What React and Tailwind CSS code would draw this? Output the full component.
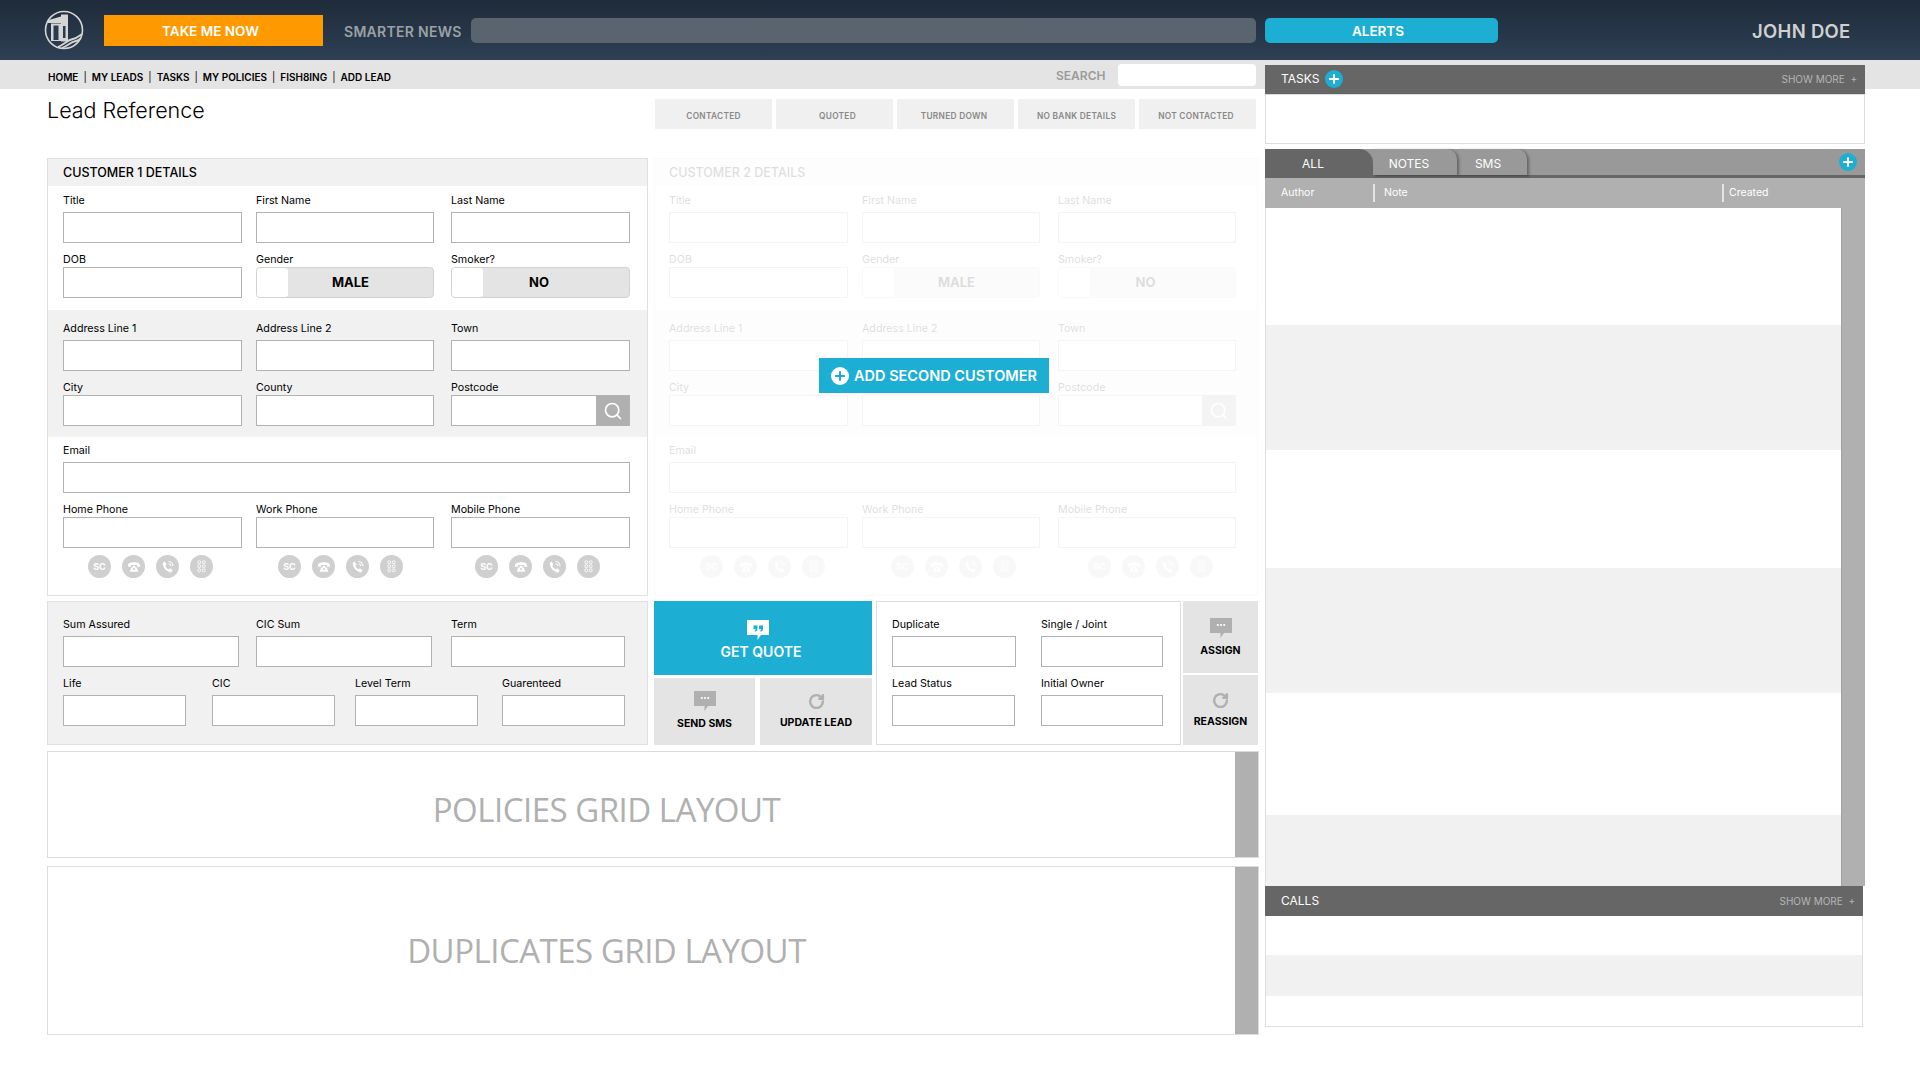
import { Search, RotateCw, Plus } from 'lucide-react'

const Input = ({ className = '' }) => (
  <div className={`h-[31px] border border-[#b2b2b2] bg-white ${className}`} />
)

function Field({ label, className = 'w-full', tall, children }) {
  return (
    <div className={className}>
      <div className={`${tall ? 'h-[20px]' : 'h-[16px]'} text-[10.700px] leading-[18px] text-black`}>{label}</div>
      {children || <Input />}
    </div>
  )
}

function Toggle({ label, textClass }) {
  return (
    <div className="relative h-[31px] rounded-[4px] border border-[#d2d2d2] bg-[#e4e4e4]">
      <div className="absolute left-0 top-0 h-full w-[31px] rounded-[3px] bg-white" />
      <div className={`flex h-full items-center justify-center text-[13px] font-bold text-black ${textClass}`}>{label}</div>
    </div>
  )
}

function RoundIcon({ children }) {
  return (
    <div className="flex h-[23px] w-[23px] items-center justify-center rounded-full bg-[#cfcfcf] text-[9px] font-bold text-white">
      {children}
    </div>
  )
}

const DeskPhone = () => (
  <svg viewBox="0 0 16 16" className="h-[14px] w-[14px]" fill="#fff">
    <path d="M1 6.500C1 3.500 4 2.500 8 2.500s7 1 7 4v1.200h-3.600V5.600H4.600v2.100H1z" />
    <path d="M4.800 8.500 3 13.500h10l-1.800-5H9.500V6.600h-3v1.900z" />
    <circle cx="8" cy="10.400" r="1.200" fill="#cfcfcf" />
  </svg>
)

const TalkPhone = () => (
  <svg viewBox="0 0 16 16" className="h-[14px] w-[14px]" fill="none">
    <path d="M4.200 1.800 6.300 5 5 6.500c.6 1.800 2 3.300 3.800 4.200l1.500-1.300 3 2.300-1.600 2.600C6.800 14 2 9 2 3.500z" fill="#fff" />
    <path d="M8.500 1.800c2.800.2 5 2.300 5.400 5.200M8.500 4.200c1.500.1 2.700 1.300 3 2.900" stroke="#fff" strokeWidth="1.200" />
  </svg>
)

const KeyGrid = () => (
  <svg viewBox="0 0 12 16" className="h-[13px] w-[11px]" fill="none" stroke="#fff" strokeWidth="1.100">
    <rect x="1.500" y="1" width="3.500" height="3.500" rx="1.500" />
    <rect x="7" y="1" width="3.500" height="3.500" rx="1.500" />
    <rect x="1.500" y="6" width="3.500" height="3.500" rx="1.500" />
    <rect x="7" y="6" width="3.500" height="3.500" rx="1.500" />
    <rect x="1.500" y="11" width="3.500" height="3.500" rx="1.500" />
    <rect x="7" y="11" width="3.500" height="3.500" rx="1.500" />
  </svg>
)

function PhoneIcons({ className }) {
  return (
    <div className={`mt-[7px] flex gap-[11px] ${className}`}>
      <RoundIcon>SC</RoundIcon>
      <RoundIcon><DeskPhone /></RoundIcon>
      <RoundIcon><TalkPhone /></RoundIcon>
      <RoundIcon><KeyGrid /></RoundIcon>
    </div>
  )
}

function CustomerCard({ title, cols, widths, inset, icons, className }) {
  const [w1, w2, w3] = widths
  return (
    <div className={`h-[438px] border border-[#e0e0e0] bg-white ${className}`}>
      <div className={`flex h-[27px] items-center bg-[#f1f1f1] pt-[1px] text-[12.500px] font-medium text-black ${inset}`}>{title}</div>
      <div className={`h-[124px] pt-[6px] ${inset}`}>
        <div className={`grid ${cols}`}>
          <Field label="Title" className={w1} tall />
          <Field label="First Name" className={w2} tall />
          <Field label="Last Name" className={w3} tall />
        </div>
        <div className={`mt-[8px] grid ${cols}`}>
          <Field label="DOB" className={w1} />
          <Field label="Gender" className={w2}><Toggle label="MALE" textClass="pl-[11px]" /></Field>
          <Field label="Smoker?" className={w3}><Toggle label="NO" textClass="pr-[3px]" /></Field>
        </div>
      </div>
      <div className={`h-[127px] bg-[#f1f1f1] pt-[10px] ${inset}`}>
        <div className={`grid ${cols}`}>
          <Field label="Address Line 1" className={w1} tall />
          <Field label="Address Line 2" className={w2} tall />
          <Field label="Town" className={w3} tall />
        </div>
        <div className={`mt-[8px] grid ${cols}`}>
          <Field label="City" className={w1} />
          <Field label="County" className={w2} />
          <Field label="Postcode" className={w3}>
            <div className="flex h-[31px] border border-[#b2b2b2] bg-white">
              <div className="flex-1" />
              <div className="flex w-[33px] items-center justify-center bg-[#b0b0b0]">
                <Search className="h-[20px] w-[20px] text-white" strokeWidth={2} />
              </div>
            </div>
          </Field>
        </div>
      </div>
      <div className={`pt-[5px] ${inset}`}>
        <Field label="Email" className="w-[567px]" tall />
        <div className={`mt-[8px] grid ${cols}`}>
          <div className={w1}>
            <Field label="Home Phone" />
            <PhoneIcons className={icons[0]} />
          </div>
          <div className={w2}>
            <Field label="Work Phone" />
            <PhoneIcons className={icons[1]} />
          </div>
          <div className={w3}>
            <Field label="Mobile Phone" />
            <PhoneIcons className={icons[2]} />
          </div>
        </div>
      </div>
    </div>
  )
}

const Bubble = ({ className, fill = '#b0b0b0', quote }) => (
  <svg viewBox="0 0 22 20" className={className}>
    <path d="M0 0h22v15h-8l-3.500 5v-5H0z" fill={fill} />
    {quote ? (
      <g fill="#1cafd3">
        <path d="M6.500 5.500h4v3.300c0 1.600-1 2.700-2.700 2.900v-1.200c.7-.2 1-.6 1-1.200H6.500z" />
        <path d="M12 5.500h4v3.300c0 1.600-1 2.700-2.700 2.900v-1.200c.7-.2 1-.6 1-1.200H12z" />
      </g>
    ) : (
      <g fill="#fff">
        <circle cx="7.800" cy="7" r="1.100" />
        <circle cx="11" cy="7" r="1.100" />
        <circle cx="14.200" cy="7" r="1.100" />
      </g>
    )}
  </svg>
)

function ActionTile({ icon, label, className, labelClass = '' }) {
  return (
    <div className={`flex flex-col items-center justify-center bg-[#e4e4e4] ${className}`}>
      {icon}
      <div className={`text-[10.500px] font-bold text-black ${labelClass}`}>{label}</div>
    </div>
  )
}

const Refresh = () => <RotateCw className="h-[17px] w-[17px] text-[#b0b0b0]" strokeWidth={3.500} />

const PlusDot = ({ className = '' }) => (
  <div className={`flex h-[18px] w-[18px] items-center justify-center rounded-full bg-[#1cafd3] ${className}`}>
    <Plus className="h-[14px] w-[14px] text-white" strokeWidth={3.500} />
  </div>
)

function GridBox({ title, className, textClass = '' }) {
  return (
    <div className={`flex border border-[#dcdcdc] bg-white ${className}`}>
      <div className={`flex flex-1 items-center justify-center pr-[70px] font-['Open_Sans',sans-serif] text-[33px] tracking-[-0.5px] text-[#b0b0b0] ${textClass}`}>
        {title}
      </div>
      <div className="w-[23px] bg-[#b0b0b0]" />
    </div>
  )
}

function PanelHeader({ title, plus, className = '' }) {
  return (
    <div className={`flex h-[29px] items-center justify-between bg-[#666666] pl-[16px] pr-[8px] ${className}`}>
      <div className={`flex items-center gap-[6px] text-[12px] text-white ${plus ? 'pb-[2px]' : ''}`}>
        {title}
        {plus ? <PlusDot /> : null}
      </div>
      <div className="text-[10px] text-[#b5b5b5]">SHOW MORE&nbsp; +</div>
    </div>
  )
}

const Logo = () => (
  <svg viewBox="0 0 40 40" className="h-[40px] w-[40px]" fill="none">
    <circle cx="20" cy="20" r="18.500" stroke="#d5d5d5" strokeWidth="1.600" />
    <path d="M3 10.500 17 6.500V13H4z" fill="#d5d5d5" />
    <path d="M7 13.500h16.500V31H7z" fill="#d5d5d5" />
    <path d="M17 4.500h7v27h-7z" fill="#d5d5d5" />
    <path d="M9.500 15.500h5V30h-5z" fill="#2a3b4d" />
    <path d="M19 16h2.500v12H19z" fill="#2a3b4d" />
    <path d="M14 37c6-2 9-7 15-8 4-.7 6-3 9-5M18 38c6-2 8-6 14-7 3-.5 4-2 5-3" stroke="#d5d5d5" strokeWidth="1.800" />
  </svg>
)

const navItems = ['HOME', 'MY LEADS', 'TASKS', 'MY POLICIES', 'FISH8ING', 'ADD LEAD']
const statuses = [
  { label: 'CONTACTED', nudge: '' },
  { label: 'QUOTED', nudge: 'pl-[6px]' },
  { label: 'TURNED DOWN', nudge: 'pr-[3px]' },
  { label: 'NO BANK DETAILS', nudge: '' },
  { label: 'NOT CONTACTED', nudge: 'pr-[3px]' },
]

export default function App() {
  return (
    <div className="min-h-screen overflow-hidden bg-white font-['Inter',sans-serif]">
      <header className="flex h-[60px] items-center bg-gradient-to-b from-[#1f2b3a] to-[#2d4054]">
        <div className="ml-[44px]"><Logo /></div>
        <div className="ml-[20px] flex h-[31px] w-[219px] items-center justify-center bg-[#ff9900] pr-[6px] pt-[2px] text-[13.500px] font-semibold text-white">
          TAKE ME NOW
        </div>
        <div className="ml-[21px] w-[127px] pt-[2px] text-[14px] font-semibold tracking-[0.3px] text-[#9ba1a6]">SMARTER NEWS</div>
        <div className="h-[25px] w-[785px] rounded-[5px] bg-[#59646e]" />
        <div className="ml-[9px] flex h-[25px] w-[233px] items-center justify-center rounded-[5px] bg-[#1cafd3] pr-[7px] pt-[3px] text-[13.500px] font-semibold text-white">
          ALERTS
        </div>
        <div className="ml-[254px] pt-[4px] text-[18.500px] font-semibold tracking-[0.3px] text-[#d0d0d0]">JOHN DOE</div>
      </header>

      <div className="flex h-[29px] items-center bg-[#e4e4e4] pl-[48px]">
        <nav className="flex w-[1008px] items-center pt-[5px] text-[10px] font-semibold text-black">
          {navItems.map((item, i) => (
            <span key={item} className="flex items-center">
              {i > 0 ? <span className="mx-[5px] font-normal">|</span> : null}
              {item}
            </span>
          ))}
        </nav>
        <div className="w-[62px] pt-[2px] text-[12px] font-semibold text-[#9a9a9a]">SEARCH</div>
        <div className="h-[22px] w-[138px] rounded-[4px] bg-white" />
      </div>

      <main className="flex">
        <div className="ml-[47px] w-[1212px]">
          <div className="flex h-[69px]">
            <h1 className="mt-[8px] h-[26px] w-[608px] text-[21.500px] leading-[26px] font-light text-black">Lead Reference</h1>
            <div className="mt-[10px] flex gap-[4px]">
              {statuses.map((status) => (
                <div key={status.label} className={`flex h-[30px] w-[117px] items-center justify-center bg-[#f0f0f0] pt-[4px] text-[8.300px] font-semibold tracking-[0.3px] text-[#888888] ${status.nudge}`}>
                  {status.label}
                </div>
              ))}
            </div>
          </div>

          <div className="flex">
            <CustomerCard
              title="CUSTOMER 1 DETAILS"
              className="w-[601px]"
              inset="px-[15px]"
              cols="grid-cols-[193px_195px_179px]"
              widths={['w-[179px]', 'w-[178px]', 'w-[179px]']}
              icons={['ml-[25px]', 'ml-[22px]', 'ml-[24px]']}
            />
            <div className="relative ml-[6px] w-[604px]">
              <div className="opacity-[0.13]">
                <CustomerCard
                  title="CUSTOMER 2 DETAILS"
                  className="w-[604px]"
                  inset="px-[14px]"
                  cols="grid-cols-[193px_196px_178px]"
                  widths={['w-[179px]', 'w-[178px]', 'w-[178px]']}
                  icons={['ml-[31px]', 'ml-[29px]', 'ml-[30px]']}
                />
              </div>
              <div className="absolute left-[165px] top-[200px] flex h-[35px] w-[230px] items-center justify-center gap-[5px] bg-[#1cafd3] text-[14.500px] font-semibold text-white">
                <div className="flex h-[18px] w-[18px] items-center justify-center rounded-full bg-white">
                  <Plus className="h-[14px] w-[14px] text-[#1cafd3]" strokeWidth={3.500} />
                </div>
                ADD SECOND CUSTOMER
              </div>
            </div>
          </div>

          <div className="mt-[5px] flex h-[144px]">
            <div className="w-[601px] border border-[#e0e0e0] bg-[#f1f1f1] px-[15px] pt-[14px]">
              <div className="grid grid-cols-[193px_195px_174px]">
                <Field label="Sum Assured" className="w-[176px]" tall />
                <Field label="CIC Sum" className="w-[176px]" tall />
                <Field label="Term" tall />
              </div>
              <div className="mt-[8px] grid grid-cols-[149px_143px_147px_123px]">
                <Field label="Life" className="w-[123px]" tall />
                <Field label="CIC" className="w-[123px]" tall />
                <Field label="Level Term" className="w-[123px]" tall />
                <Field label="Guarenteed" tall />
              </div>
            </div>

            <div className="ml-[6px] flex w-[218px] flex-col">
              <div className="flex h-[74px] flex-col items-center justify-center bg-[#1cafd3] pr-[4px] pt-[4px] text-[14px] leading-[17px] font-semibold text-white">
                <Bubble className="mb-[3px] mr-[7px] h-[20px] w-[22px]" fill="#fff" quote />
                GET QUOTE
              </div>
              <div className="mt-[3px] flex flex-1 gap-[5px]">
                <ActionTile
                  className="w-[101px]"
                  labelClass="mt-[5px]"
                  label="SEND SMS"
                  icon={<Bubble className="h-[20px] w-[22px]" />}
                />
                <ActionTile className="flex-1" labelClass="mt-[5px]" label="UPDATE LEAD" icon={<Refresh />} />
              </div>
            </div>

            <div className="ml-[4px] w-[305px] border border-[#dddddd] bg-white pl-[15px] pt-[14px]">
              <div className="grid grid-cols-[149px_122px]">
                <Field label="Duplicate" className="w-[124px]" tall />
                <Field label="Single / Joint" tall />
              </div>
              <div className="mt-[8px] grid grid-cols-[149px_122px]">
                <Field label="Lead Status" className="w-[123px]" tall />
                <Field label="Initial Owner" tall />
              </div>
            </div>

            <div className="ml-[2px] flex w-[75px] flex-col gap-[2px]">
              <ActionTile className="h-[72px] pt-[2px]" labelClass="mt-[5px]" label="ASSIGN" icon={<Bubble className="h-[20px] w-[22px]" />} />
              <ActionTile className="flex-1 pt-[2px]" labelClass="mt-[5px]" label="REASSIGN" icon={<Refresh />} />
            </div>
          </div>

          <GridBox title="POLICIES GRID LAYOUT" className="mt-[6px] h-[107px]" textClass="pt-[11px]" />
          <GridBox title="DUPLICATES GRID LAYOUT" className="mt-[8px] h-[169px]" />
        </div>

        <aside className="relative z-10 ml-[6px] -mt-[24px] w-[600px]">
          <PanelHeader title="TASKS" plus />
          <div className="h-[50px] border border-[#dddddd] bg-white" />

          <div className="mt-[5px] flex h-[29px] items-start justify-between border-b-[3px] border-[#666666] bg-[#999999] pr-[8px] text-[12px] text-white">
            <div className="flex h-full">
              <div className="flex h-[29px] w-[108px] items-center justify-center rounded-tr-[14px] bg-[#666666] pr-[12px] pt-[1px]">ALL</div>
              <div className="z-[2] flex h-[26px] w-[84px] items-center justify-center rounded-tr-[10px] bg-[#999999] pr-[12px] pt-[3px] shadow-[2px_1px_3px_rgba(0,0,0,0.35)]">NOTES</div>
              <div className="z-[1] flex h-[26px] w-[70px] items-center justify-center rounded-tr-[10px] bg-[#999999] pr-[8px] pt-[3px] shadow-[2px_1px_3px_rgba(0,0,0,0.35)]">SMS</div>
            </div>
            <PlusDot className="mt-[4px]" />
          </div>

          <div className="flex h-[30px] items-center bg-[#b0b0b0] text-[10.500px] text-white">
            <div className="w-[108px] pl-[16px]">Author</div>
            <div className="h-[18px] w-[2px] bg-[#e4e4e4]" />
            <div className="w-[347px] pl-[9px]">Note</div>
            <div className="h-[18px] w-[2px] bg-[#e4e4e4]" />
            <div className="pl-[5px]">Created</div>
          </div>

          <div className="flex h-[678px] border-l border-[#dddddd] bg-white">
            <div className="flex flex-1 flex-col">
              <div className="h-[117px]" />
              <div className="h-[125px] bg-[#f1f1f1]" />
              <div className="h-[118px]" />
              <div className="h-[125px] bg-[#f1f1f1]" />
              <div className="h-[122px]" />
              <div className="flex-1 bg-[#f1f1f1]" />
            </div>
            <div className="w-[24px] border-l border-[#a0a0a0] bg-[#b0b0b0]" />
          </div>

          <PanelHeader title="CALLS" className="h-[30px] w-[598px]" />
          <div className="h-[111px] w-[598px] border-x border-b border-[#dddddd] bg-white">
            <div className="h-[39px]" />
            <div className="h-[41px] bg-[#f1f1f1]" />
          </div>
        </aside>
      </main>
    </div>
  )
}
